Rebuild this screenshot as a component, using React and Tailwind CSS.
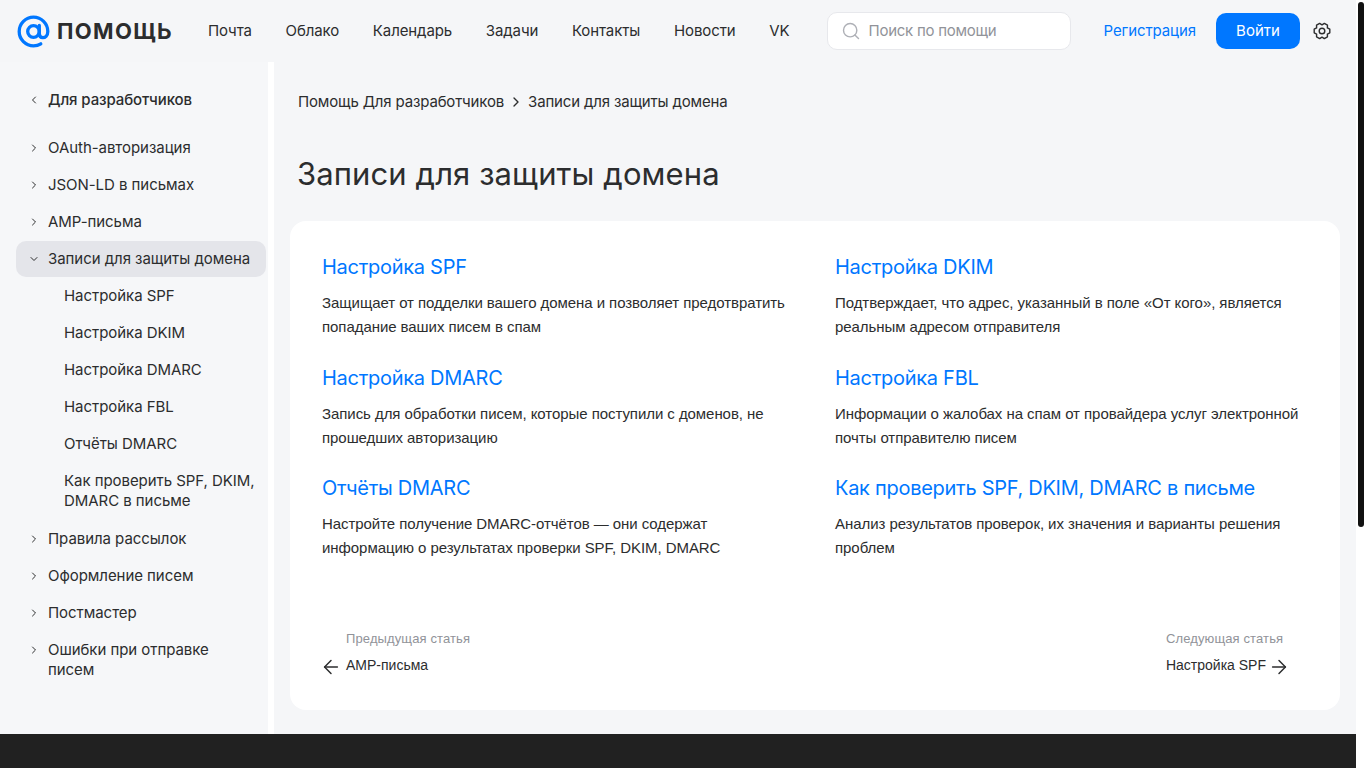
import { ChevronLeft, ChevronRight, ChevronDown, ArrowLeft, ArrowRight, Search } from 'lucide-react';

const display = "font-['Inter','Noto_Sans',sans-serif]";

const navLinks = ['Почта', 'Облако', 'Календарь', 'Задачи', 'Контакты', 'Новости', 'VK'];

const sections = [
  { title: 'Настройка SPF', text: 'Защищает от подделки вашего домена и позволяет предотвратить попадание ваших писем в спам' },
  { title: 'Настройка DKIM', text: 'Подтверждает, что адрес, указанный в поле «От кого», является реальным адресом отправителя' },
  { title: 'Настройка DMARC', text: 'Запись для обработки писем, которые поступили с доменов, не прошедших авторизацию' },
  { title: 'Настройка FBL', text: 'Информации о жалобах на спам от провайдера услуг электронной почты отправителю писем' },
  { title: 'Отчёты DMARC', text: 'Настройте получение DMARC-отчётов — они содержат информацию о результатах проверки SPF, DKIM, DMARC' },
  { title: 'Как проверить SPF, DKIM, DMARC в письме', text: 'Анализ результатов проверок, их значения и варианты решения проблем' },
];

const subItems = ['Настройка SPF', 'Настройка DKIM', 'Настройка DMARC', 'Настройка FBL', 'Отчёты DMARC'];

function Logo() {
  return (
    <div className="w-[156px] shrink-0 flex items-center">
      <svg width="33" height="33" viewBox="0 0 33 33" fill="none">
        <circle cx="16.5" cy="16.5" r="5.8" stroke="#0077ff" strokeWidth="3.3" />
        <path d="M22.3 10.5V18.5C22.3 21.5 24 22.6 25.8 22.6C28 22.6 30.8 21 30.8 16.5C30.8 8.6 24.4 2.2 16.5 2.2C8.6 2.2 2.2 8.6 2.2 16.5C2.2 24.4 8.6 30.8 16.5 30.8C19.4 30.8 21.8 30.1 23.8 28.8" stroke="#0077ff" strokeWidth="3.3" strokeLinecap="round" />
      </svg>
      <span className={`${display} ml-[7px] text-[22px] leading-none font-bold text-[#2c2d2e] tracking-[1.35px]`}>ПОМОЩЬ</span>
    </div>
  );
}

function Gear() {
  return (
    <svg width="18" height="18" viewBox="0 0 18 18" fill="none" stroke="#2c2d2e" strokeWidth="1.4" strokeLinejoin="round" className="ml-[13px]">
      <circle cx="9" cy="9" r="2.8" />
      <path d="M16.8 7.2V10.8L14.37 12.1L14.46 14.85L11.34 16.65L9 15.2L6.66 16.65L3.54 14.85L3.63 12.1L1.2 10.8V7.2L3.63 5.9L3.54 3.15L6.66 1.35L9 2.8L11.34 1.35L14.46 3.15L14.37 5.9L16.8 7.2Z" />
    </svg>
  );
}

function Header() {
  return (
    <header className={`${display} h-[62px] flex items-center pl-[17px] text-[15px] tracking-[-0.1px] text-[#2c2d2e]`}>
      <Logo />
      <nav className="ml-[35px] flex items-center gap-[33.7px]">
        {navLinks.map((link) => (
          <a key={link}>{link}</a>
        ))}
      </nav>
      <div className="ml-[38px] w-[244px] h-[38px] flex items-center bg-white border border-[#e7e8ec] rounded-[10px] pl-[13px]">
        <Search size={20} strokeWidth={1.7} className="text-[#aeb0b6]" />
        <span className="ml-[7px] tracking-[-0.25px] text-[#919399]">Поиск по помощи</span>
      </div>
      <a className="ml-8 text-[#0077ff]">Регистрация</a>
      <button className="ml-5 w-[84px] h-9 rounded-[10px] bg-[#0077ff] text-white tracking-normal">Войти</button>
      <Gear />
    </header>
  );
}

function SideItem({ children, open, active }) {
  const Icon = open ? ChevronDown : ChevronRight;
  return (
    <div className={`flex pl-3 pr-3 py-2 mb-px rounded-[10px] leading-5 ${active ? 'bg-[#e4e5ea]' : ''}`}>
      <Icon size={12} className="mt-1 shrink-0 text-[#2c2d2e]" />
      <span className="ml-2">{children}</span>
    </div>
  );
}

function Sidebar() {
  return (
    <aside className={`${display} w-[268px] shrink-0 pl-4 pr-0.5 pt-[28px] text-[15px] tracking-[-0.05px] text-[#2c2d2e] bg-[#f6f7f9]`}>
      <div className="flex items-center pl-3 h-5 mb-5 font-medium tracking-[-0.1px]">
        <ChevronLeft size={12} />
        <span className="ml-2">Для разработчиков</span>
      </div>
      <SideItem>OAuth-авторизация</SideItem>
      <SideItem>JSON-LD в письмах</SideItem>
      <SideItem>AMP-письма</SideItem>
      <SideItem open active>Записи для защиты домена</SideItem>
      {subItems.map((item) => (
        <div key={item} className="pl-12 py-2 mb-px leading-5">{item}</div>
      ))}
      <div className="pl-12 pr-2 py-2 mb-0.5 leading-5">Как проверить SPF, DKIM, DMARC в письме</div>
      <SideItem>Правила рассылок</SideItem>
      <SideItem>Оформление писем</SideItem>
      <SideItem>Постмастер</SideItem>
      <SideItem>Ошибки при отправке писем</SideItem>
    </aside>
  );
}

function Article() {
  return (
    <main className="flex-1 pl-4 pr-4">
      <div className={`${display} pl-2 pt-[30px] flex items-center h-[50px] text-[15px] tracking-[-0.16px] text-[#2c2d2e]`}>
        <span>Помощь Для разработчиков</span>
        <ChevronRight size={16} className="mx-1" />
        <span>Записи для защиты домена</span>
      </div>
      <h1 className={`${display} pl-[7px] mt-[42px] text-[31px] tracking-[0.1px] leading-10 text-[#2c2d2e]`}>Записи для защиты домена</h1>
      <section className="mt-[27px] h-[489px] bg-white rounded-2xl px-8 pt-[31px] flex flex-col font-['Liberation_Sans',Arial,sans-serif]">
        <div className="grid grid-cols-2 gap-x-10 gap-y-[23.5px]">
          {sections.map((s) => (
            <div key={s.title}>
              <h2 className={`${display} text-[20px] tracking-[-0.28px] leading-[30px] text-[#0077ff]`}>{s.title}</h2>
              <p className="mt-[9px] text-[15px] tracking-[-0.06px] leading-6 text-[#2c2d2e]">{s.text}</p>
            </div>
          ))}
        </div>
        <div className="mt-auto mb-[37px] pr-[18px] flex justify-between text-[14px] text-[#2c2d2e]">
          <div className="pl-6">
            <div className="text-[13px] tracking-[0.12px] text-[#919399] leading-4 mb-2.5">Предыдущая статья</div>
            <div className="h-4 leading-4 flex items-center">
              <ArrowLeft size={22} strokeWidth={1.6} className="-ml-[26px] mr-1 mt-1" />
              АМР-письма
            </div>
          </div>
          <div>
            <div className="text-[13px] tracking-[0.12px] text-[#919399] leading-4 mb-2.5">Следующая статья</div>
            <div className="h-4 leading-4 flex items-center">
              Настройка SPF
              <ArrowRight size={22} strokeWidth={1.6} className="ml-[2px] mt-1" />
            </div>
          </div>
        </div>
      </section>
    </main>
  );
}

export default function App() {
  return (
    <div className="h-screen overflow-hidden flex bg-white">
      <div className="w-[1356px] flex flex-col bg-[#f5f6f8]">
        <Header />
        <div className="h-[672px] flex">
          <Sidebar />
          <div className="w-1.5 bg-white" />
          <Article />
        </div>
        <footer className="flex-1 bg-[#212121]" />
      </div>
      <div className="flex-1 px-0.5 pt-0.5">
        <div className="h-[525px] rounded-[3px] bg-[#111111]" />
      </div>
    </div>
  );
}
